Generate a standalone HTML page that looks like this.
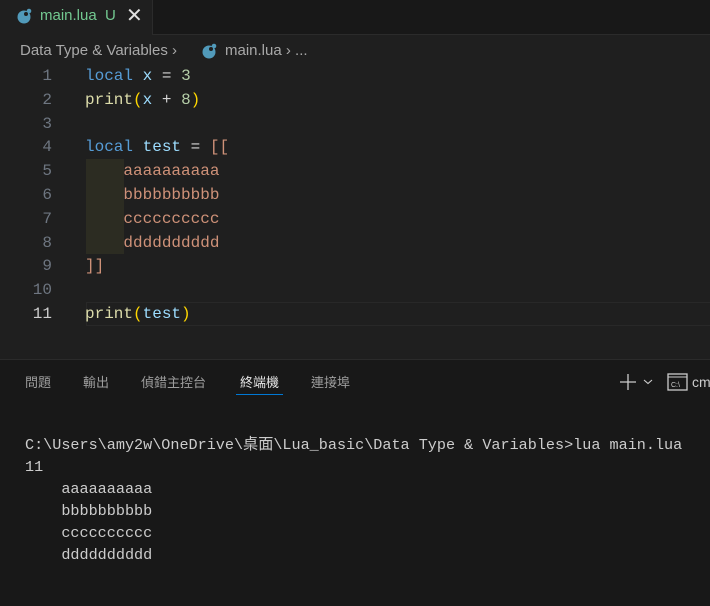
<!DOCTYPE html>
<html><head><style>
body{margin:0;width:710px;height:605px;background:#1f1f1f;overflow:hidden;position:relative;font-family:"Liberation Sans","Noto Sans CJK TC",sans-serif;}
.abs{position:absolute;}
.tabbar{left:0;top:0;width:710px;height:34px;background:#181818;border-bottom:1px solid #2b2b2b;}
.tab{left:0;top:0;width:152px;height:35px;background:#1f1f1f;border-right:1px solid #2b2b2b;}
.code{font-family:"Liberation Mono",monospace;font-size:16px;white-space:pre;}
.ln{color:#6e7681;text-align:right;width:52px;left:0;}
.k{color:#569cd6}.v{color:#9cdcfe}.n{color:#b5cea8}.f{color:#dcdcaa}.p{color:#ffd700}.s{color:#ce9178}.o{color:#d4d4d4}
.panel{left:0;top:359px;width:710px;height:246px;background:#181818;border-top:1px solid #2b2b2b;}
.pt{top:372px;font-size:13px;color:#9d9d9d;}
.term{font-family:"Liberation Mono","Noto Sans CJK TC",monospace;font-size:15.15px;color:#cccccc;white-space:pre;left:25px;line-height:22px;}
</style></head><body>
<div class="abs tabbar"></div>
<div class="abs tab"></div>
<svg class="abs" style="left:16px;top:7px" width="18" height="18"><circle cx="8" cy="10" r="6.5" fill="#519aba"/><circle cx="13" cy="4" r="2.3" fill="#519aba"/><circle cx="10" cy="7" r="2" fill="#1f1f1f"/></svg>
<div class="abs" style="left:40px;top:7px;font-size:15px;color:#73c991">main.lua&nbsp; U</div>
<div class="abs" style="left:126px;top:3px;font-size:20px;color:#e0e0e0">✕</div>
<div class="abs" style="left:20px;top:42px;font-size:15px;color:#a9a9a9">Data Type &amp; Variables ›</div>
<svg class="abs" style="left:201px;top:42px" width="18" height="18"><circle cx="8" cy="10" r="6.5" fill="#519aba"/><circle cx="13" cy="4" r="2.3" fill="#519aba"/><circle cx="10" cy="7" r="2" fill="#1f1f1f"/></svg>
<div class="abs" style="left:225px;top:42px;font-size:15px;color:#a9a9a9">main.lua › ...</div>
<div class="abs" style="left:86px;top:159px;width:38px;height:95px;background:#2c2c22;"></div>
<div class="abs" style="left:86px;top:302px;width:624px;height:22px;border:1px solid #282828;border-right:none;"></div>
<div class="abs code ln" style="top:65px;line-height:23.8px">1
2
3
4
5
6
7
8
9
10
<span style="color:#ccc">11</span></div>
<div class="abs code" style="left:85px;top:65px;line-height:23.8px"><span class="k">local</span> <span class="v">x</span> <span class="o">=</span> <span class="n">3</span>
<span class="f">print</span><span class="p">(</span><span class="v">x</span> <span class="o">+</span> <span class="n">8</span><span class="p">)</span>

<span class="k">local</span> <span class="v">test</span> <span class="o">=</span> <span class="s">[[</span>
<span class="s">    aaaaaaaaaa</span>
<span class="s">    bbbbbbbbbb</span>
<span class="s">    cccccccccc</span>
<span class="s">    dddddddddd</span>
<span class="s">]]</span>

<span class="f">print</span><span class="p">(</span><span class="v">test</span><span class="p">)</span></div>
<div class="abs panel"></div>
<div class="abs pt" style="left:25px">問題</div>
<div class="abs pt" style="left:83px">輸出</div>
<div class="abs pt" style="left:141px">偵錯主控台</div>
<div class="abs pt" style="left:240px;color:#e7e7e7">終端機</div>
<div class="abs" style="left:236px;top:394px;width:47px;height:1px;background:#0078d4"></div>
<div class="abs pt" style="left:311px">連接埠</div>
<svg class="abs" style="left:619px;top:373px" width="34" height="18"><path d="M9 1v16M1 9h16" stroke="#ccc" stroke-width="1.3"/><path d="M25 7l4 3.5 4-3.5" fill="none" stroke="#ccc" stroke-width="1.1"/></svg>
<svg class="abs" style="left:667px;top:373px" width="22" height="18"><rect x="1" y="1" width="19" height="16" fill="none" stroke="#ccc" stroke-width="1.3"/><line x1="1" y1="4" x2="20" y2="4" stroke="#ccc"/><text x="4" y="14" font-size="7" fill="#ccc" font-family="Liberation Sans">C:\</text></svg>
<div class="abs" style="left:692px;top:374px;font-size:14px;color:#ccc">cmd</div>
<div class="abs term" style="top:434px">C:\Users\amy2w\OneDrive\桌面\Lua_basic\Data Type &amp; Variables&gt;lua main.lua
11
    aaaaaaaaaa
    bbbbbbbbbb
    cccccccccc
    dddddddddd</div>
</body></html>
